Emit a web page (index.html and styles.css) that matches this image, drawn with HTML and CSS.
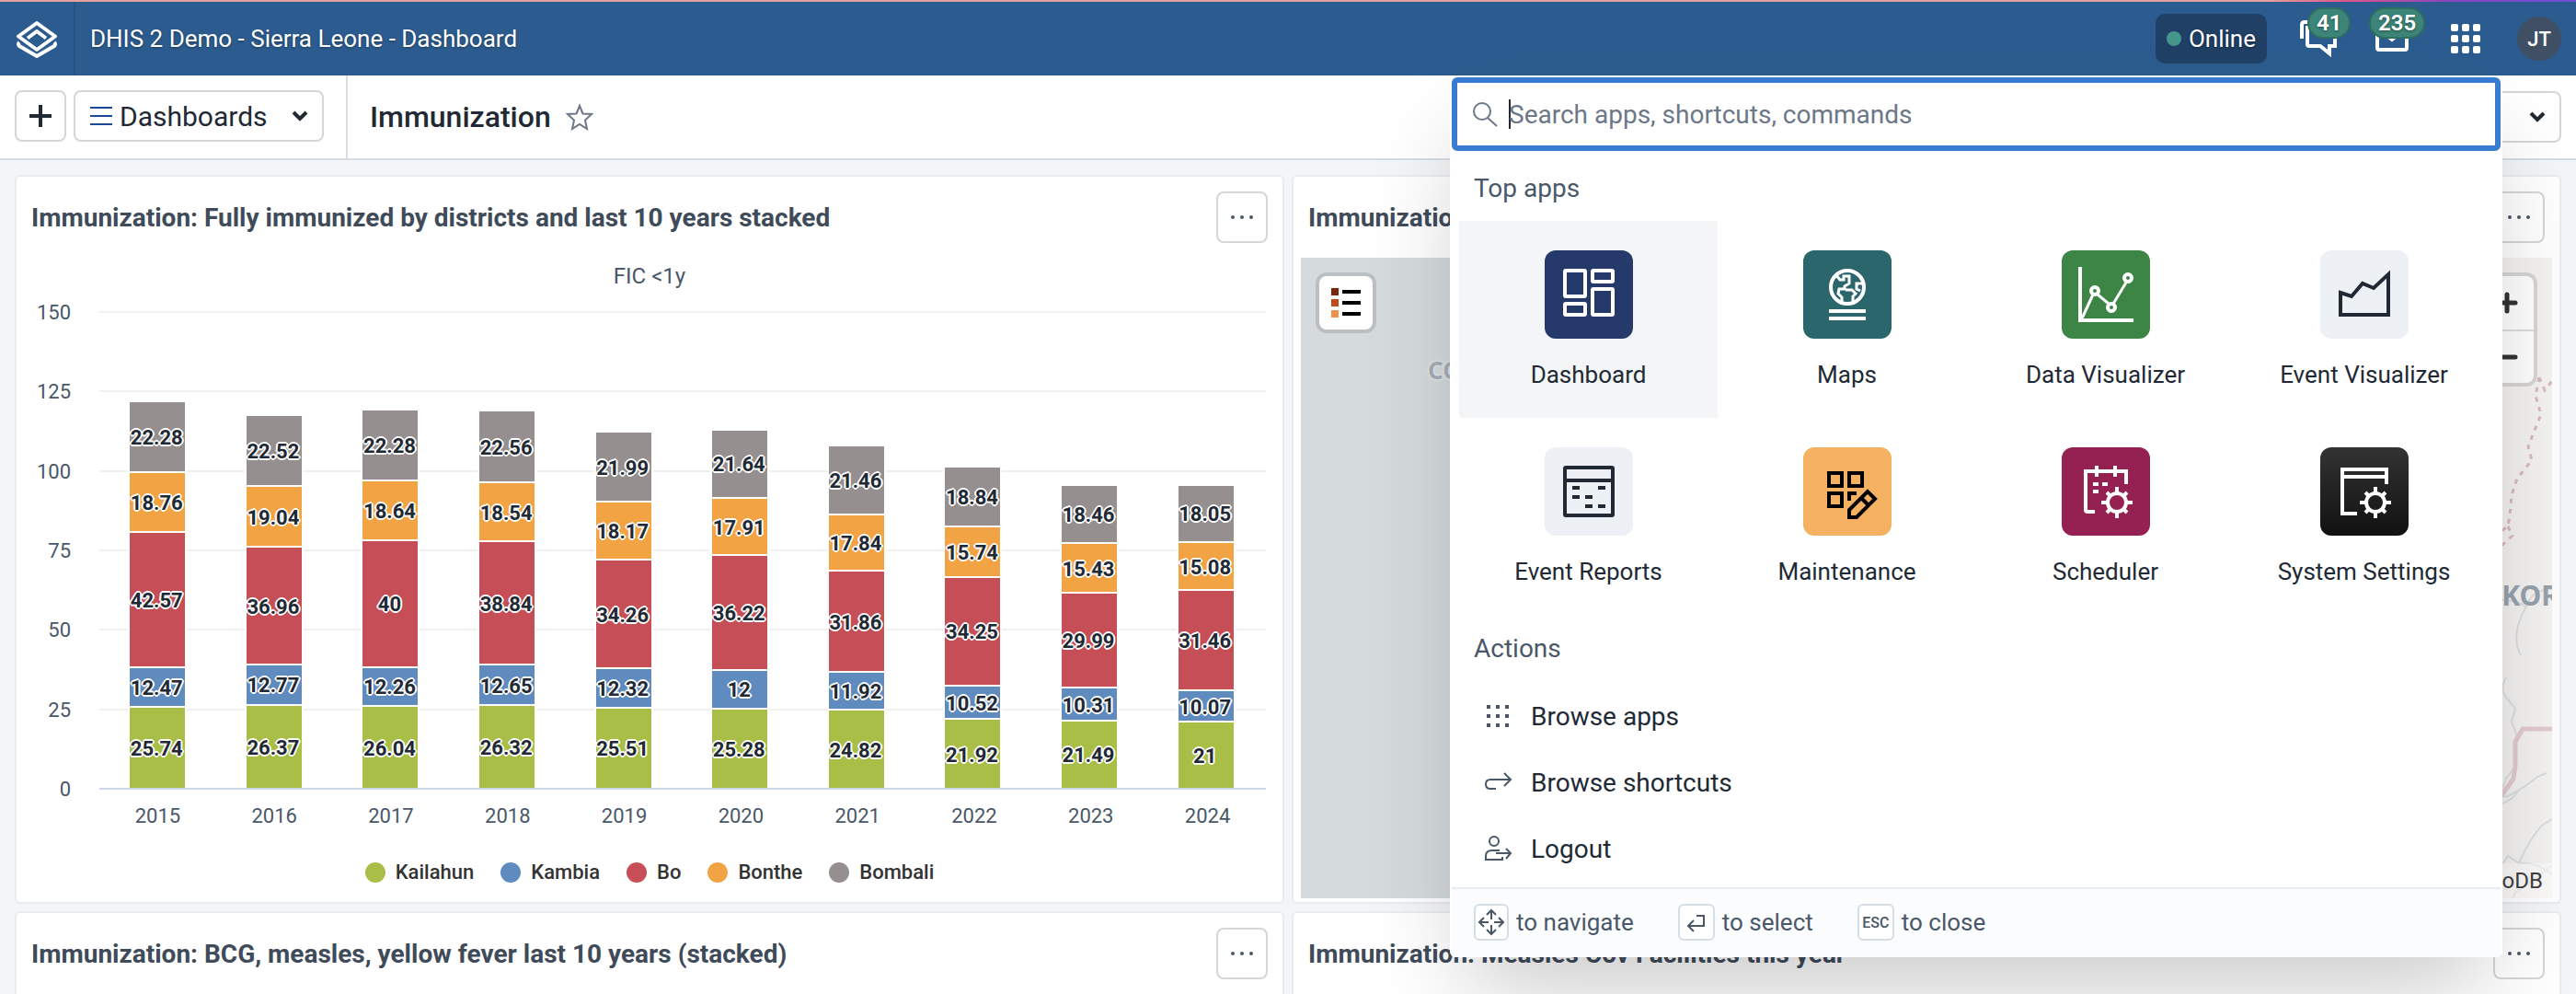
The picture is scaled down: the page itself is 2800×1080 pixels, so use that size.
FILE: index.html
```html
<!DOCTYPE html>
<html lang="en">
<head>
  <meta charset="UTF-8">
  <meta name="viewport" content="width=device-width, initial-scale=1.0">
  <title>DHIS 2 Demo - Sierra Leone - Dashboard</title>
  <link rel="stylesheet" href="styles.css">
</head>
<body>
  <svg class="sprite" aria-hidden="true">
    <symbol id="gear" viewBox="-18 -18 36 36">
      <circle r="10" fill="none" stroke="#fff" stroke-width="4"/>
      <path d="M0-11V-17M0 11V17M-11 0H-17M11 0H17M8 -8L11 -11M-8 8L-11 11M-8 -8L-11 -11M8 8L11 11" stroke="#fff" stroke-width="4"/>
    </symbol>
    <symbol id="chevron" viewBox="0 0 20 12">
      <path d="M3 2L10 9L17 2" fill="none" stroke="currentColor" stroke-width="4"/>
    </symbol>
    <symbol id="dots" viewBox="0 0 24 4">
      <circle cx="2" cy="2" r="2"/><circle cx="12" cy="2" r="2"/><circle cx="22" cy="2" r="2"/>
    </symbol>
  </svg>

  <header class="header">
    <a class="header-logo" href="#" aria-label="Home">
      <svg width="48" height="44" viewBox="0 0 48 44" fill="none" stroke="#fff" stroke-width="4" stroke-linejoin="round">
        <path d="M24 5L44 19.500L24 34L4 19.500Z"/>
        <path d="M14 21.500L24 14L34 21.500"/>
        <path d="M5 26Q3 28 5 30L24 41L43 30Q45 28 43 26"/>
      </svg>
    </a>
    <h1 class="header-title">DHIS 2 Demo - Sierra Leone - Dashboard</h1>
    <div class="online"><span class="online-dot"></span>Online</div>
    <nav class="header-icons">
      <a class="header-icon" href="#" aria-label="Interpretations">
        <svg width="44" height="44" viewBox="0 0 44 44" fill="none" stroke="#fff" stroke-width="4">
          <path d="M4 22V7Q4 4 7 4H24"/>
          <path d="M10 10H40V30H34V38L24 30H12Q10 30 10 28Z"/>
        </svg>
        <span class="badge">41</span>
      </a>
      <a class="header-icon" href="#" aria-label="Messages">
        <svg width="44" height="44" viewBox="0 0 44 44" fill="none" stroke="#fff" stroke-width="4">
          <rect x="6" y="8" width="32" height="26" rx="2"/>
          <path d="M6 10L22 23L38 10"/>
        </svg>
        <span class="badge">235</span>
      </a>
      <button class="header-icon" aria-label="Apps">
        <svg width="32" height="32" viewBox="0 0 32 32" fill="#fff">
          <rect width="8" height="8" rx="2"/><rect x="12" width="8" height="8" rx="2"/><rect x="24" width="8" height="8" rx="2"/>
          <rect y="12" width="8" height="8" rx="2"/><rect x="12" y="12" width="8" height="8" rx="2"/><rect x="24" y="12" width="8" height="8" rx="2"/>
          <rect y="24" width="8" height="8" rx="2"/><rect x="12" y="24" width="8" height="8" rx="2"/><rect x="24" y="24" width="8" height="8" rx="2"/>
        </svg>
      </button>
      <button class="avatar">JT</button>
    </nav>
  </header>

  <div class="toolbar">
    <div class="toolbar-nav">
      <button class="btn btn-square" aria-label="Create dashboard">
        <svg width="24" height="24" viewBox="0 0 24 24" stroke="#212934" stroke-width="4"><path d="M12 0V24M0 12H24"/></svg>
      </button>
      <button class="btn btn-dashboards">
        <svg width="24" height="20" viewBox="0 0 24 20" stroke="#1d4799" stroke-width="2"><path d="M0 1H24M0 10H24M0 19H24"/></svg>
        <span>Dashboards</span>
        <svg class="btn-chevron" width="20" height="12"><use href="#chevron"/></svg>
      </button>
    </div>
    <h2 class="toolbar-title">Immunization</h2>
    <button class="star" aria-label="Star dashboard">
      <svg width="30" height="30" viewBox="0 0 30 30" fill="none" stroke="#6c7787" stroke-width="2">
        <path d="M15 3L18.500 11.500L28 12L21 18.500L23 28L15 23L7 28L9 18.500L2 12L11.500 11.500Z"/>
      </svg>
    </button>
    <button class="btn btn-more"><span>More</span><svg width="20" height="12"><use href="#chevron"/></svg></button>
  </div>

  <main class="board">
    <section class="card">
      <div class="card-head">
        <h3>Immunization: Fully immunized by districts and last 10 years stacked</h3>
        <button class="btn btn-square" aria-label="Options"><svg width="24" height="4"><use href="#dots"/></svg></button>
      </div>
      <div class="chart">
        <div class="chart-title">FIC &lt;1y</div>
        <div class="chart-body">
          <div class="y-axis"><span>150</span><span>125</span><span>100</span><span>75</span><span>50</span><span>25</span><span>0</span></div>
          <div class="plot">
            <div class="gridlines"><i></i><i></i><i></i><i></i><i></i><i></i><i></i></div>
            <div class="bars">
              <div class="bar"><span class="seg kailahun" style="--v:25.74">25.74</span><span class="seg kambia" style="--v:12.47">12.47</span><span class="seg bo" style="--v:42.57">42.57</span><span class="seg bonthe" style="--v:18.76">18.76</span><span class="seg bombali" style="--v:22.28">22.28</span></div>
              <div class="bar"><span class="seg kailahun" style="--v:26.37">26.37</span><span class="seg kambia" style="--v:12.77">12.77</span><span class="seg bo" style="--v:36.96">36.96</span><span class="seg bonthe" style="--v:19.04">19.04</span><span class="seg bombali" style="--v:22.52">22.52</span></div>
              <div class="bar"><span class="seg kailahun" style="--v:26.04">26.04</span><span class="seg kambia" style="--v:12.26">12.26</span><span class="seg bo" style="--v:40">40</span><span class="seg bonthe" style="--v:18.64">18.64</span><span class="seg bombali" style="--v:22.28">22.28</span></div>
              <div class="bar"><span class="seg kailahun" style="--v:26.32">26.32</span><span class="seg kambia" style="--v:12.65">12.65</span><span class="seg bo" style="--v:38.84">38.84</span><span class="seg bonthe" style="--v:18.54">18.54</span><span class="seg bombali" style="--v:22.56">22.56</span></div>
              <div class="bar"><span class="seg kailahun" style="--v:25.51">25.51</span><span class="seg kambia" style="--v:12.32">12.32</span><span class="seg bo" style="--v:34.26">34.26</span><span class="seg bonthe" style="--v:18.17">18.17</span><span class="seg bombali" style="--v:21.99">21.99</span></div>
              <div class="bar"><span class="seg kailahun" style="--v:25.28">25.28</span><span class="seg kambia" style="--v:12">12</span><span class="seg bo" style="--v:36.22">36.22</span><span class="seg bonthe" style="--v:17.91">17.91</span><span class="seg bombali" style="--v:21.64">21.64</span></div>
              <div class="bar"><span class="seg kailahun" style="--v:24.82">24.82</span><span class="seg kambia" style="--v:11.92">11.92</span><span class="seg bo" style="--v:31.86">31.86</span><span class="seg bonthe" style="--v:17.84">17.84</span><span class="seg bombali" style="--v:21.46">21.46</span></div>
              <div class="bar"><span class="seg kailahun" style="--v:21.92">21.92</span><span class="seg kambia" style="--v:10.52">10.52</span><span class="seg bo" style="--v:34.25">34.25</span><span class="seg bonthe" style="--v:15.74">15.74</span><span class="seg bombali" style="--v:18.84">18.84</span></div>
              <div class="bar"><span class="seg kailahun" style="--v:21.49">21.49</span><span class="seg kambia" style="--v:10.31">10.31</span><span class="seg bo" style="--v:29.99">29.99</span><span class="seg bonthe" style="--v:15.43">15.43</span><span class="seg bombali" style="--v:18.46">18.46</span></div>
              <div class="bar"><span class="seg kailahun" style="--v:21">21</span><span class="seg kambia" style="--v:10.07">10.07</span><span class="seg bo" style="--v:31.46">31.46</span><span class="seg bonthe" style="--v:15.08">15.08</span><span class="seg bombali" style="--v:18.05">18.05</span></div>
            </div>
          </div>
          <div class="x-axis"><span>2015</span><span>2016</span><span>2017</span><span>2018</span><span>2019</span><span>2020</span><span>2021</span><span>2022</span><span>2023</span><span>2024</span></div>
        </div>
        <ul class="legend">
          <li><i class="kailahun"></i>Kailahun</li>
          <li><i class="kambia"></i>Kambia</li>
          <li><i class="bo"></i>Bo</li>
          <li><i class="bonthe"></i>Bonthe</li>
          <li><i class="bombali"></i>Bombali</li>
        </ul>
      </div>
    </section>

    <section class="card">
      <div class="card-head">
        <h3>Immunization</h3>
        <button class="btn btn-square" aria-label="Options"><svg width="24" height="4"><use href="#dots"/></svg></button>
      </div>
      <div class="map">
        <svg class="map-lines" width="80" height="696" viewBox="0 0 80 696" fill="none">
          <g stroke="#d9b9c0" stroke-width="3" stroke-dasharray="5 6">
            <path d="M66 130L62 150L68 170L60 190L54 205L58 220L42 240L36 258L34 280L32 292L18 302"/>
            <path d="M66 130L72 144L80 134M32 292L37 302L26 312L18 316"/>
          </g>
          <g stroke="#dcdde0" stroke-width="2">
            <path d="M18 302L0 308M20 372Q36 370 52 379Q58 360 80 360M52 379Q34 410 46 432"/>
            <path d="M30 456Q22 470 32 480L40 490L36 504L42 520L38 536L42 550L30 566L24 582L30 586Q50 576 64 564L74 560"/>
            <path d="M18 672L32 650L44 658Q56 630 70 616L80 610M18 594Q34 594 46 576M44 658Q62 656 80 670M18 736L40 690L60 676L80 660"/>
          </g>
          <path d="M80 512H48L40 526V552L38 566L24 586L16 604" stroke="#e2cbd0" stroke-width="5"/>
        </svg>
        <button class="map-legend" aria-label="Legend">
          <svg width="32" height="32" viewBox="0 0 32 32">
            <path fill="#752a0f" d="M0 0h8v8H0z"/><path fill="#c24b1c" d="M0 12h8v8H0z"/><path fill="#ee914c" d="M0 24h8v8H0z"/>
            <path fill="#000" d="M12 2h20v4H12zM12 14h20v4H12zM12 26h20v4H12z"/>
          </svg>
        </button>
        <span class="place place-west">CONAKRY</span>
        <span class="place place-east">KOR</span>
        <div class="zoom-control">
          <button aria-label="Zoom in"><svg width="24" height="24" stroke="#333" stroke-width="5" stroke-linecap="round"><path d="M12 3V21M3 12H21"/></svg></button>
          <button aria-label="Zoom out"><svg width="24" height="24" stroke="#333" stroke-width="5" stroke-linecap="round"><path d="M3 12H21"/></svg></button>
        </div>
        <div class="attribution">GeoDB</div>
      </div>
    </section>

    <section class="card">
      <div class="card-head">
        <h3>Immunization: BCG, measles, yellow fever last 10 years (stacked)</h3>
        <button class="btn btn-square" aria-label="Options"><svg width="24" height="4"><use href="#dots"/></svg></button>
      </div>
    </section>

    <section class="card">
      <div class="card-head">
        <h3>Immunization: Measles Cov Facilities this year</h3>
        <button class="btn btn-square" aria-label="Options"><svg width="24" height="4"><use href="#dots"/></svg></button>
      </div>
    </section>
  </main>

  <div class="palette" role="dialog" aria-label="Command palette">
    <label class="search">
      <svg width="28" height="28" viewBox="0 0 28 28" fill="none" stroke="#6c7787" stroke-width="2"><circle cx="11" cy="11" r="9"/><path d="M17 18L27 27"/></svg>
      <span class="caret"></span>
      <input type="text" placeholder="Search apps, shortcuts, commands" aria-label="Search apps, shortcuts, commands">
    </label>
    <h2 class="palette-heading">Top apps</h2>
    <div class="apps">
      <a class="app selected" href="#">
        <svg class="app-icon" viewBox="0 0 96 96" fill="none" stroke="#fff" stroke-width="4">
          <rect width="96" height="96" rx="12" fill="#25396b" stroke="none"/>
          <rect x="22" y="22" width="22" height="28" rx="1"/><rect x="22" y="58" width="22" height="12" rx="1"/>
          <rect x="52" y="22" width="22" height="12" rx="1"/><rect x="52" y="42" width="22" height="28" rx="1"/>
        </svg>
        Dashboard
      </a>
      <a class="app" href="#">
        <svg class="app-icon" viewBox="0 0 96 96" fill="none" stroke="#fff" stroke-width="4">
          <rect width="96" height="96" rx="12" fill="#2c666d" stroke="none"/>
          <circle cx="48" cy="40" r="18"/>
          <path d="M36 27L40 32H44V28H50V36L45 39V42H39L38 47L42 51V57M65 36H58V42L62 44M54 57V50L57 47L53 43H46" stroke-width="3"/>
          <path d="M28 66H68M28 74H68"/>
        </svg>
        Maps
      </a>
      <a class="app" href="#">
        <svg class="app-icon" viewBox="0 0 96 96" fill="none" stroke="#fff" stroke-width="4">
          <rect width="96" height="96" rx="12" fill="#3d8545" stroke="none"/>
          <path d="M20 18V76H78"/>
          <path d="M22 74L34 48M39 48L51 58M56 58L70 35" stroke-width="3"/>
          <circle cx="36" cy="44" r="4"/><circle cx="54" cy="62" r="4"/><circle cx="72" cy="30" r="4"/>
        </svg>
        Data Visualizer
      </a>
      <a class="app" href="#">
        <svg class="app-icon" viewBox="0 0 96 96" fill="none" stroke="#212934" stroke-width="4">
          <rect width="96" height="96" rx="12" fill="#edf1f5" stroke="none"/>
          <path d="M22 46L34 50L46 36L58 41L74 26V70H22Z"/>
        </svg>
        Event Visualizer
      </a>
      <a class="app" href="#">
        <svg class="app-icon" viewBox="0 0 96 96" fill="none" stroke="#212934" stroke-width="4">
          <rect width="96" height="96" rx="12" fill="#edf1f5" stroke="none"/>
          <rect x="22" y="22" width="52" height="52" rx="1"/>
          <path d="M22 36H74M30 44h8M58 44h8M30 54h8M44 54h8M44 64h8M58 64h8"/>
        </svg>
        Event Reports
      </a>
      <a class="app" href="#">
        <svg class="app-icon" viewBox="0 0 96 96" fill="none" stroke="#000" stroke-width="4">
          <rect width="96" height="96" rx="12" fill="#f3b161" stroke="none"/>
          <path d="M28 28h14v14h-14zM50 28h14v14h-14zM28 50h14v14h-14zM50 58V50H58"/>
          <path d="M50 76V68L70 48L78 56L58 76ZM63 55L71 63"/>
        </svg>
        Maintenance
      </a>
      <a class="app" href="#">
        <svg class="app-icon" viewBox="0 0 96 96" fill="none" stroke="#fff" stroke-width="4">
          <rect width="96" height="96" rx="12" fill="#952152" stroke="none"/>
          <path d="M36 70H28Q26 70 26 68V26H70V40M38 20V32M58 20V32M34 40h6M44 40h6M34 48h6"/>
          <use href="#gear" x="42" y="42" width="36" height="36"/>
        </svg>
        Scheduler
      </a>
      <a class="app" href="#">
        <svg class="app-icon" viewBox="0 0 96 96" fill="none" stroke="#fff" stroke-width="4">
          <defs><linearGradient id="dark" x2="0" y2="1"><stop stop-color="#333"/><stop offset="1" stop-color="#111"/></linearGradient></defs>
          <rect width="96" height="96" rx="12" fill="url(#dark)" stroke="none"/>
          <path d="M40 72H24V24H72V40M24 32H72"/>
          <use href="#gear" x="42" y="42" width="36" height="36"/>
        </svg>
        System Settings
      </a>
    </div>
    <h2 class="palette-heading">Actions</h2>
    <ul class="actions">
      <li><a href="#">
        <svg width="32" height="32" viewBox="0 0 32 32" fill="#4a5768"><path d="M4 4h4v4H4zM14 4h4v4h-4zM24 4h4v4h-4zM4 14h4v4H4zM14 14h4v4h-4zM24 14h4v4h-4zM4 24h4v4H4zM14 24h4v4h-4zM24 24h4v4h-4z"/></svg>
        Browse apps</a></li>
      <li><a href="#">
        <svg width="32" height="32" viewBox="0 0 32 32" fill="none" stroke="#4a5768" stroke-width="2"><path d="M14 23H8Q3 23 3 18T8 13H29M23 6L30 13L23 20"/></svg>
        Browse shortcuts</a></li>
      <li><a href="#">
        <svg width="32" height="32" viewBox="0 0 32 32" fill="none" stroke="#4a5768" stroke-width="2"><circle cx="12" cy="8" r="5"/><path d="M18 18H10Q3 18 3 24V28H21V25M14 21H30M25 16L30 21L25 27"/></svg>
        Logout</a></li>
    </ul>
    <footer class="hints">
      <div class="hint"><kbd><svg width="32" height="32" viewBox="0 0 32 32" fill="none" stroke="#4a5768" stroke-width="2"><path d="M16 13V3M11 8L16 3L21 8M16 19V29M11 24L16 29L21 24M13 16H3M8 11L3 16L8 21M19 16H29M24 11L29 16L24 21"/></svg></kbd>to navigate</div>
      <div class="hint"><kbd><svg width="32" height="32" viewBox="0 0 32 32" fill="none" stroke="#4a5768" stroke-width="2"><path d="M16 9H24V20H8M13 14L7 20L13 26"/></svg></kbd>to select</div>
      <div class="hint"><kbd>ESC</kbd>to close</div>
    </footer>
  </div>
</body>
</html>
```

FILE: styles.css
```css
* { box-sizing: border-box; }
body {
  margin: 0;
  height: 100vh;
  display: flex;
  flex-direction: column;
  overflow: hidden;
  position: relative;
  background: #f3f5f7;
  color: #212934;
  font-family: Roboto, "Noto Sans", sans-serif;
  font-size: 28px;
}
h1, h2, h3, ul { margin: 0; padding: 0; font-weight: 400; font-size: inherit; list-style: none; }
a { color: inherit; text-decoration: none; }
button { font: inherit; color: inherit; background: none; border: 0; padding: 0; }
svg { display: block; flex: none; }
.sprite { position: absolute; width: 0; height: 0; }

/* header bar */
.header {
  flex: none;
  height: 82px;
  display: flex;
  align-items: center;
  padding-right: 16px;
  padding-top: 2px;
  background:
    linear-gradient(90deg, #e3a29c 0, #e3a29c 88%, #e0568a 91%, #8a45c0 95%, #6d4fd6 100%) top / 100% 2px no-repeat,
    #2c5c8f;
  color: #fff;
  font-size: 26px;
  text-shadow: 0 1px 3px rgba(0, 0, 0, 0.4);
}
.header-logo {
  width: 82px; height: 80px;
  display: flex; align-items: center; justify-content: center;
  border-right: 2px solid #28527f;
}
.header-title { margin-left: 16px; }
.online {
  margin-left: auto;
  display: flex; align-items: center; gap: 8px;
  height: 54px; padding: 0 12px;
  border-radius: 10px;
  background: #204065;
}
.online-dot { width: 16px; height: 16px; border-radius: 50%; background: #44978a; }
.header-icons { display: flex; align-items: center; margin-left: 34px; }
.header-icon {
  position: relative;
  width: 80px; height: 80px;
  display: flex; align-items: center;
}
button.header-icon { width: 78px; padding-left: 6px; }
.badge {
  position: absolute; top: 6px; left: 10px;
  padding: 0 8px;
  border: 2px solid #2f6f60;
  border-radius: 17px;
  background: #3c8578;
  font-size: 24px; line-height: 30px; font-weight: 600;
}
.header-icon + .header-icon .badge { left: -3px; }
.avatar {
  width: 48px; height: 48px;
  border-radius: 50%;
  background: #404f63;
  color: #fff;
  font-size: 22px; font-weight: 500;
}

/* dashboard toolbar */
.toolbar {
  flex: none;
  display: flex; align-items: center;
  height: 92px;
  padding-right: 16px;
  background: #fff;
  border-bottom: 2px solid #d5dde5;
}
.toolbar-nav {
  display: flex; gap: 8px;
  width: 378px; height: 90px;
  padding: 16px 24px 0 16px;
  border-right: 2px solid #d5dde5;
}
.btn {
  height: 56px;
  display: flex; align-items: center; justify-content: center;
  border: 2px solid #d5d5da;
  border-radius: 8px;
  background: #fff;
}
.btn-square { width: 56px; flex: none; }
.btn-square svg { fill: #4a5768; }
.btn-dashboards { flex: 1; gap: 8px; padding: 0 14px 0 16px; justify-content: flex-start; font-size: 30px; }
.btn-chevron { margin-left: auto; }
.toolbar-title { margin-left: 24px; font-weight: 500; font-size: 32px; }
.star { margin-left: 16px; }
.btn-more { margin-left: auto; gap: 32px; padding: 0 14px; }

/* cards */
.board {
  flex: 1;
  min-height: 0;
  overflow: hidden;
  display: grid;
  grid-template-columns: 1fr 1fr;
  grid-auto-rows: 792px;
  gap: 8px;
  padding: 16px;
}
.card {
  display: flex; flex-direction: column;
  min-width: 0;
  border: 2px solid #e8ebf0;
  border-radius: 6px;
  background: #fff;
}
.card-head {
  display: flex; align-items: center; justify-content: space-between;
  padding: 16px;
}
.card-head h3 { font-weight: 700; color: #404b5a; }

/* stacked chart */
.chart { color: #4a5768; font-size: 22px; }
.chart-title { text-align: center; font-size: 24px; line-height: 40px; }
.chart-body {
  display: grid;
  grid-template-columns: 59px 1fr;
  column-gap: 31px;
  margin-top: 6px;
  margin-right: 18px;
}
.y-axis {
  display: flex; flex-direction: column; justify-content: space-between;
  padding-top: 2px;
  text-align: right;
  line-height: 24px;
}
.plot { position: relative; height: 520px; margin: 12px 0; }
.gridlines {
  height: 100%;
  display: flex; flex-direction: column; justify-content: space-between;
}
.gridlines i { height: 2px; background: #f0f0f0; }
.gridlines i:last-child { background: #ccd6eb; }
.bars {
  position: absolute; inset: 0 2px 2px 0;
  display: flex;
}
.bar { flex: 1; display: flex; flex-direction: column-reverse; align-items: center; }
.seg {
  flex: none;
  width: 64px;
  height: calc(var(--v) * 100% / 150);
  display: flex; align-items: center; justify-content: center;
  padding: 2px 2px 0 0;
  border: solid #fff;
  border-width: 2px 2px 0;
  color: #212934;
  font-weight: 700;
  text-shadow: 2px 0 #fff, -2px 0 #fff, 0 2px #fff, 0 -2px #fff, 1px 1px #fff, -1px 1px #fff, 1px -1px #fff, -1px -1px #fff;
}
.kailahun { background: #a9be46; }
.kambia { background: #5f8bbf; }
.bo { background: #c64e56; }
.bonthe { background: #f2a444; }
.bombali { background: #968f8f; }
.x-axis { grid-column: 2; display: flex; line-height: 26px; padding-top: 4px; }
.x-axis span { flex: 1; text-align: center; }
.legend {
  display: flex; justify-content: center; gap: 29px;
  margin-top: 35px;
  color: #333; font-weight: 500; line-height: 26px;
}
.legend li { display: flex; align-items: center; gap: 11px; }
.legend i { width: 22px; height: 22px; border-radius: 50%; }

/* map */
.map {
  flex: 1;
  position: relative;
  overflow: hidden;
  margin: 0 8px 4px;
  background: linear-gradient(90deg, #d5dadd 50%, #f4f3f1 50%);
}
.map-lines { position: absolute; right: 0; top: 0; }
.map-legend {
  position: absolute; left: 16px; top: 16px;
  width: 66px; height: 66px;
  display: flex; align-items: center; justify-content: center;
  border: 4px solid rgba(0, 0, 0, 0.12);
  border-radius: 12px;
  background: #fff padding-box;
}
.place { position: absolute; font-family: "Noto Sans", sans-serif; font-weight: 700; }
.place-west { left: 138px; top: 104px; color: #a6aeb6; font-size: 26px; text-shadow: 0 0 3px #fff; }
.place-east { right: -8px; top: 346px; color: #97a2ad; font-size: 30px; }
.zoom-control {
  position: absolute; right: 16px; top: 16px;
  border: 4px solid rgba(0, 0, 0, 0.12);
  border-radius: 12px;
  background: #fff padding-box;
}
.zoom-control button { width: 58px; height: 58px; display: flex; align-items: center; justify-content: center; }
.zoom-control button + button { border-top: 2px solid #ddd; }
.attribution {
  position: absolute; right: 0; bottom: 0;
  padding: 0 10px;
  background: rgba(255, 255, 255, 0.5);
  color: #404040;
  font-size: 24px; line-height: 38px;
}

/* command palette */
.palette {
  position: absolute; top: 82px; right: 80px;
  width: 1144px;
  padding: 2px 2px 0;
  border-radius: 0 0 6px 6px;
  background: #fff;
  box-shadow: 0 50px 100px -20px rgba(0, 0, 0, 0.22);
}
.search {
  display: flex; align-items: center;
  height: 80px;
  padding: 0 16px;
  border: 6px solid #3a7bd2;
  border-radius: 6px;
}
.caret { width: 2px; height: 32px; margin: 0 -2px 0 12px; background: #212934; }
.search input {
  flex: 1;
  border: 0; outline: 0; padding: 0;
  background: none;
  font: inherit;
}
.search input::placeholder { color: #6c7787; opacity: 1; }
.palette-heading { padding: 21px 24px 19px; line-height: 40px; color: #4a5768; }
.apps { display: grid; grid-template-columns: repeat(4, 1fr); margin: -4px 8px 0; }
.app {
  display: flex; flex-direction: column; align-items: center;
  height: 214px;
  padding-top: 32px;
  gap: 24px;
  font-size: 26px; line-height: 30px;
  border-radius: 2px;
}
.selected { background: #f3f5f7; }
.app-icon { width: 96px; height: 96px; }
.apps + .palette-heading { padding-top: 17px; padding-bottom: 17px; }
.actions a {
  display: flex; align-items: center; gap: 20px;
  height: 72px;
  padding-left: 34px;
}
.hints {
  display: flex; gap: 48px;
  height: 76px;
  margin-top: 6px;
  padding: 16px 24px;
  border-top: 2px solid #e8edf2;
  border-radius: 0 0 4px 4px;
  background: #fbfcfe;
  color: #4a5768;
  font-size: 26px;
}
.hint { display: flex; align-items: center; gap: 8px; height: 40px; }
kbd {
  width: 40px; height: 40px;
  display: flex; align-items: center; justify-content: center;
  border: 2px solid #d5dde5;
  border-radius: 6px;
  background: #fff;
  font-family: inherit; font-size: 16px; font-weight: 500;
}
.hint:first-child kbd { width: 38px; }
```
